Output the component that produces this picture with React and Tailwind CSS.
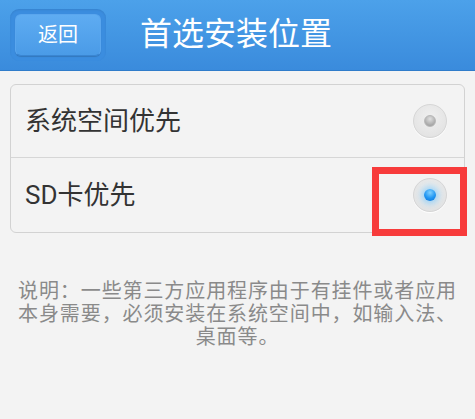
import React from "react";

const FONT = { fontFamily: "Roboto, 'Noto Sans CJK SC', 'Noto Sans', sans-serif" };

function Radio({ checked }) {
  return (
    <div className="w-[34px] h-[34px] rounded-full border border-[#d6d6d6] bg-[radial-gradient(circle_at_50%_40%,#f0f0f0_0%,#e4e4e4_70%,#dcdcdc_100%)] flex items-center justify-center shadow-[0_1px_1px_rgba(255,255,255,0.9)]">
      {checked ? (
        <div className="w-[12px] h-[12px] rounded-full bg-[radial-gradient(circle_at_50%_30%,#7fd0ff_0%,#1e95f2_55%,#0a6fd6_100%)] shadow-[0_0_6px_3px_rgba(90,190,255,0.55)]" />
      ) : (
        <div className="w-[12px] h-[12px] rounded-full border border-[#b8b8b8] bg-[radial-gradient(circle_at_50%_30%,#e0e0e0_0%,#a9a9a9_70%,#9a9a9a_100%)]" />
      )}
    </div>
  );
}

export default function App() {
  return (
    <div className="relative w-[475px] h-[419px] bg-[#f3f3f3] overflow-hidden" style={FONT}>
      <div className="h-[71px] bg-gradient-to-b from-[#4ca1ea] to-[#3a8bdc] border-b border-[#2f7cca] flex items-center pl-[10px]">
        <div className="rounded-[9px] bg-[#3b8ddf] p-[5px] shadow-[inset_0_1px_2px_rgba(0,0,0,0.08)]">
          <div className="w-[86px] h-[42px] rounded-[6px] bg-gradient-to-b from-[#5eacf2] to-[#4a9be7] border border-[#5aa6ee] border-b-[#3a86d2] shadow-[0_1px_1px_rgba(0,0,0,0.15)] flex items-center justify-center text-white text-[20px] leading-none">
            返回
          </div>
        </div>
        <div className="ml-[34px] text-white text-[32px] leading-none -mt-[3px]">首选安装位置</div>
      </div>

      <div className="mx-[10px] mt-[13px] border border-[#d2d2d2] rounded-[6px] bg-[#f3f3f3]">
        <div className="h-[73px] flex items-center justify-between pl-[14px] pr-[17px] border-b border-[#d6d6d6]">
          <span className="text-[26px] text-[#333] leading-none">系统空间优先</span>
          <Radio checked={false} />
        </div>
        <div className="h-[74px] flex items-center justify-between pl-[14px] pr-[17px]">
          <span className="text-[26px] text-[#333] leading-none">SD卡优先</span>
          <Radio checked={true} />
        </div>
      </div>

      <p className="mt-[47px] px-[16px] text-center text-[20px] leading-[23px] tracking-[0.9px] text-[#8a8a8a]">
        说明：一些第三方应用程序由于有挂件或者应用本身需要，必须安装在系统空间中，如输入法、桌面等。
      </p>

      <div className="absolute left-[372px] top-[167px] w-[95px] h-[69px] border-[7px] border-[#f73b3b]" />
    </div>
  );
}
